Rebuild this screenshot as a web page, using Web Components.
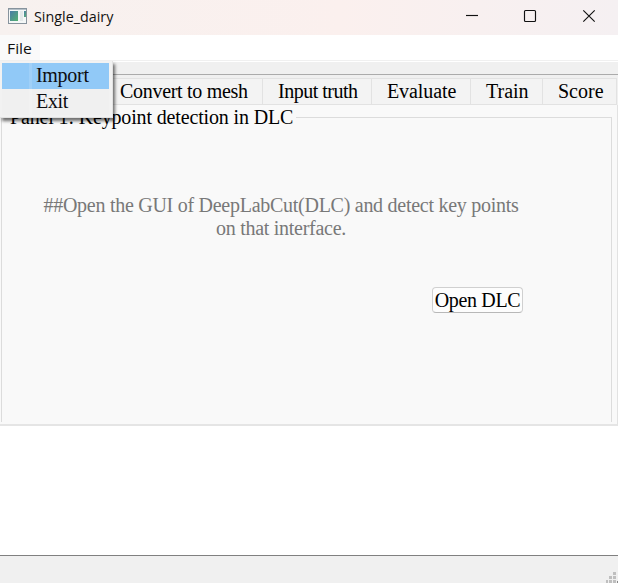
<!DOCTYPE html>
<html lang="en"><head><meta charset="utf-8"><title>Single_dairy</title>
<style>html,body{margin:0;height:100%;overflow:hidden;background:#fff}</style></head>
<body><app-window></app-window>
<script>
const define = (name, html) => customElements.define(name, class extends HTMLElement {
  constructor() {
    super();
    const t = document.createElement('template');
    t.innerHTML = html;
    this.attachShadow({mode: 'open'}).append(t.content.cloneNode(true));
  }
});

define('title-bar', `<style>
:host{display:flex;height:35px;flex:none;align-items:center;background:linear-gradient(90deg,#f7f1ef,#fbf0ee 55%,#f5f0f2);font:15px/35px "Open Sans","Noto Sans",sans-serif;color:#111}
.icon{margin:-4px 7px 0 8px;flex:none}
.name{flex:1;height:35px;line-height:32px;white-space:nowrap}
.name span{display:inline-block;transform:scaleX(.955);transform-origin:0 50%}
.controls{flex:none}
</style>
<svg class="icon" width="19" height="16" viewBox="0 0 19 16"><defs><linearGradient id="g" x1="0" y1="0" x2="1" y2="1"><stop stop-color="#4a7ba8"/><stop offset="1" stop-color="#55b070"/></linearGradient></defs><path fill="#87939d" d="M0 0h19v16H0z"/><path fill="#b5c0c8" d="M1 1h17v1H1z"/><path fill="#f4f7f7" d="M1 2h17v13H1z"/><path fill="url(#g)" d="M2 3h8v10H2z"/><path fill="#e3e8e9" d="M12 3h3v10h-3z"/><path fill="url(#g)" d="M16 3h2v6h-2z"/></svg>
<div class="name"><span><slot></slot></span></div>
<svg class="controls" width="154" height="35" viewBox="464 0 154 35" fill="none" stroke="#111" stroke-width="1.15"><path d="M466 15.5h12"/><rect x="524.5" y="10.5" width="11" height="11" rx="1"/><path d="M583.3 10.3l11.4 11.4M594.7 10.3l-11.4 11.4"/></svg>`);

define('menu-bar', `<style>
:host{display:flex;flex:none;height:25px;background:#fff;border-bottom:1px solid #f0f0f0;margin-bottom:1px;font:15px/27px "Open Sans","Noto Sans",sans-serif;color:#111}
div{width:33px;padding-left:7px;background:#fafafa}
span{display:inline-block;transform:scaleX(1.05);transform-origin:0 50%}
</style><div><span><slot></slot></span></div>`);

define('menu-item', `<style>
:host{display:flex;height:26px;line-height:25px;background:#f0f0f0;width:107px;white-space:nowrap;color:#0d0d10;letter-spacing:-.3px}
:host([active]){background:#91c9f7}
i{width:27px;margin-right:2px;flex:none;border-right:3px solid rgba(255,255,255,.14)}
span{margin-left:2px}
</style><i></i><span><slot></slot></span>`);

define('drop-menu', `<style>
:host{position:absolute;left:0;top:61px;z-index:2;box-sizing:border-box;width:113px;height:57px;padding:2px 0 0 2px;background:#f2f2f2;box-shadow:inset -1px -1px #e2e2e2,2px 3px 3px rgba(0,0,0,.55)}
</style><slot></slot>`);

define('tab-item', `<style>
:host{box-sizing:border-box;height:27px;border:1px solid #e2e2e2;border-left:0;background:#f3f3f3;padding-left:15px;line-height:24px;white-space:nowrap;flex:none}
</style><slot></slot>`);

define('tab-strip', `<style>
:host{display:flex;flex:none;height:27px;padding:3px 0 0 105px;background:#f0f0f0}
</style><slot></slot>`);

define('group-box', `<style>
:host{display:block;box-sizing:border-box;margin:12px 5px 0 1px;height:305px;border:1px solid #dcdcdc;border-bottom:0}
.legend{width:max-content;background:#f9f9f9;margin:-13px 0 0 5px;padding:0 3px;line-height:24px;height:24px;white-space:nowrap;letter-spacing:-.15px}
.note{color:#787878;text-align:center;line-height:23px;width:500px;margin:65px 0 0 29px;white-space:nowrap;letter-spacing:-.27px}
.action{display:flex;margin:47px 0 0 430px}
</style><div class="legend"><slot name="title"></slot></div><div class="note"><slot></slot></div><div class="action"><slot name="action"></slot></div>`);

define('push-button', `<style>
:host{box-sizing:border-box;width:91px;height:26px;border:1px solid #d0d0d0;border-bottom-color:#b8b8b8;border-radius:4px;background:#fdfdfd;text-align:center;line-height:24px;white-space:nowrap;letter-spacing:-.35px}
</style><slot></slot>`);

define('status-bar', `<style>
:host{display:flex;justify-content:flex-end;align-items:flex-end;flex:none;box-sizing:border-box;height:28px;border-top:1px solid #808080;background:#f0f0f0}
svg{display:block}
</style><svg width="12" height="11" viewBox="606 572 12 11" fill="#bfbfbf" shape-rendering="crispEdges"><path d="M613 572h3v3h-3zM609 576h3v3h-3zM613 576h3v3h-3zM606 580h2v3h-2zM609 580h3v3h-3zM613 580h3v3h-3z"/><path fill="#888" d="M617 581h1v2h-1z"/></svg>`);

define('app-window', `<style>
:host{display:flex;flex-direction:column;width:618px;height:583px;position:relative;overflow:hidden;background:#fff;font:20px "Liberation Serif","Times New Roman",serif;color:#000}
.tool{height:12px;flex:none;background:#f0f0f0;border-bottom:1px solid #ababab}
.pane{box-sizing:border-box;height:321px;flex:none;background:#f9f9f9;border-right:1px solid #e2e2e2;border-bottom:2px solid #e5e5e5;display:flow-root}
.blank{flex:1}
</style>
<title-bar>Single_dairy</title-bar>
<menu-bar>File</menu-bar>
<div class="tool"></div>
<tab-strip><tab-item style="width:158px;letter-spacing:-.3px">Convert to mesh</tab-item><tab-item style="width:109px;letter-spacing:-.5px">Input truth</tab-item><tab-item style="width:99px;letter-spacing:-.1px">Evaluate</tab-item><tab-item style="width:72px">Train</tab-item><tab-item style="width:74px">Score</tab-item></tab-strip>
<div class="pane"><group-box><span slot="title">Panel 1: Keypoint detection in DLC</span>##Open the GUI of DeepLabCut(DLC) and detect key points<br>on that interface.<push-button slot="action">Open DLC</push-button></group-box></div>
<div class="blank"></div>
<status-bar></status-bar>
<drop-menu><menu-item active>Import</menu-item><menu-item>Exit</menu-item></drop-menu>`);
</script></body></html>
